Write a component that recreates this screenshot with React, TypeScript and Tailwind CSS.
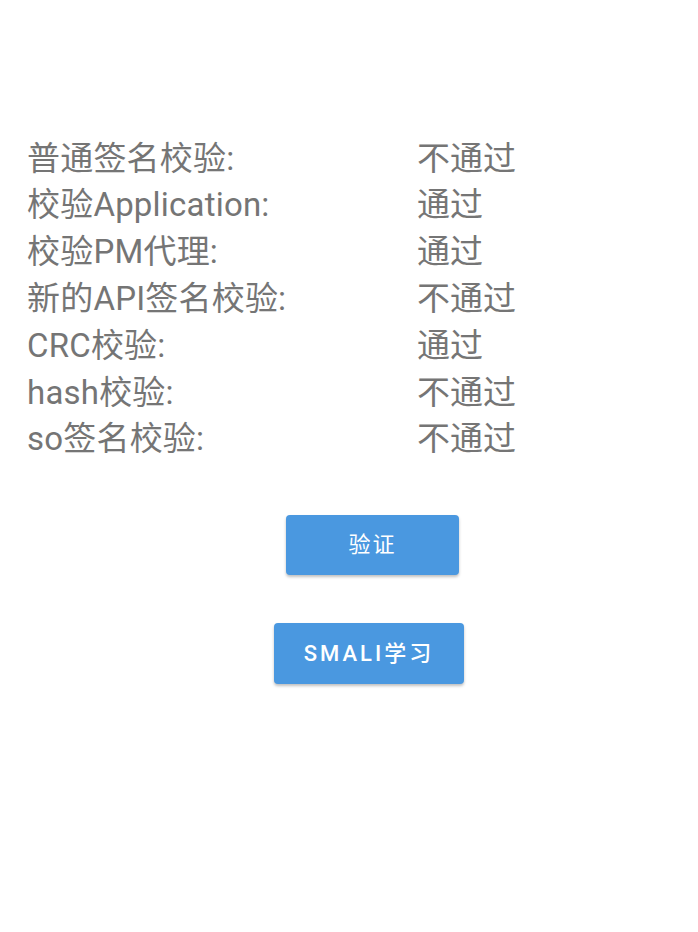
const rows: [string, string][] = [
  ["普通签名校验:", "不通过"],
  ["校验Application:", "通过"],
  ["校验PM代理:", "通过"],
  ["新的API签名校验:", "不通过"],
  ["CRC校验:", "通过"],
  ["hash校验:", "不通过"],
  ["so签名校验:", "不通过"],
];

export default function App() {
  return (
    <div
      className="w-[698px] h-[932px] bg-white flex flex-col"
      style={{ fontFamily: 'Roboto, "Noto Sans CJK SC", sans-serif' }}
    >
      <div className="flex flex-col pt-[135px] pl-[27px]">
        {rows.map(([label, result]) => (
          <div key={label} className="flex h-[46.8px] items-center text-[33px] text-[#757575]">
            <span className="w-[390px] whitespace-nowrap tracking-[0.2px]">{label}</span>
            <span>{result}</span>
          </div>
        ))}
      </div>
      <div className="flex flex-col items-start mt-[52px]">
        <button className="ml-[286px] w-[173px] h-[60px] rounded-[4px] bg-[#4a98e0] text-white text-[22px] tracking-[2px] shadow-[0_2px_3px_rgba(0,0,0,0.25)]">
          验证
        </button>
        <button className="ml-[274px] mt-[48px] w-[190px] h-[61px] rounded-[4px] bg-[#4a98e0] text-white text-[22px] font-medium tracking-[3px] shadow-[0_2px_3px_rgba(0,0,0,0.25)]">
          SMALI学习
        </button>
      </div>
    </div>
  );
}
